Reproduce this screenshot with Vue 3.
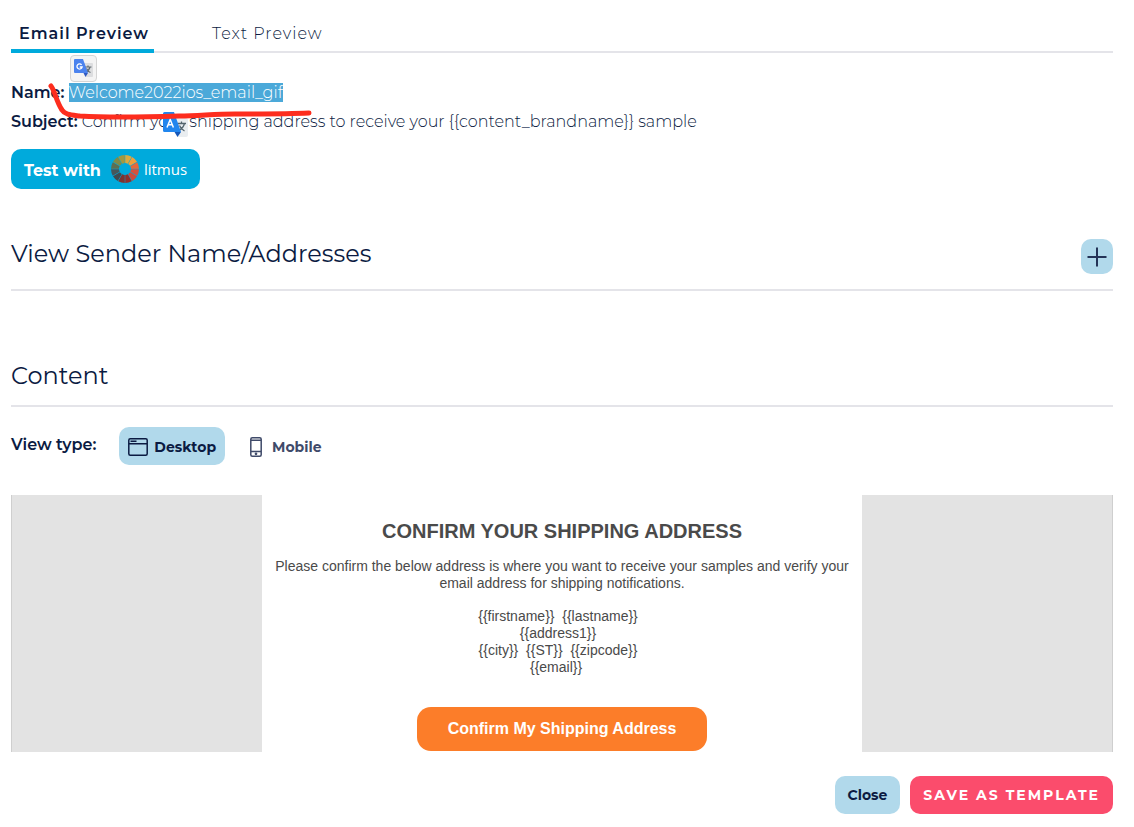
<script setup>
import { ref } from 'vue'

const tab = ref('email')
const view = ref('desktop')

const name = 'Welcome2022ios_email_gif'
const subject = 'Confirm your shipping address to receive your {{content_brandname}} sample'
const address = [
  '{{firstname}}\u00a0 {{lastname}}',
  '{{address1}}',
  '{{city}}\u00a0 {{ST}}\u00a0 {{zipcode}}',
  '{{email}}\u00a0',
]

const wheelColors = [
  '#dfaa3c', '#f0a03c', '#e8683a', '#d4513c', '#cb4b3c', '#8f2f2b',
  '#7d3330', '#3f4a50', '#46565a', '#5d6f50', '#7f8a48', '#a5983f',
]
const point = (radius, degrees) => {
  const a = (degrees * Math.PI) / 180
  return `${(15 + radius * Math.sin(a)).toFixed(2)} ${(15 - radius * Math.cos(a)).toFixed(2)}`
}
const wheel = wheelColors.map((color, i) => {
  const from = i * 30 + 1
  const to = i * 30 + 29
  return {
    color,
    d: `M${point(14, from)}A14 14 0 0 1 ${point(14, to)}L${point(6, to - 1)}A6 6 0 0 0 ${point(6, from + 1)}Z`,
  }
})
</script>

<template>
  <main class="page">
    <nav class="tabs" role="tablist">
      <button class="tab" :class="{ active: tab === 'email' }" role="tab" :aria-selected="tab === 'email'" @click="tab = 'email'">Email Preview</button>
      <button class="tab" :class="{ active: tab === 'text' }" role="tab" :aria-selected="tab === 'text'" @click="tab = 'text'">Text Preview</button>
    </nav>

    <section class="details">
      <p class="detail"><strong>Name:</strong> <mark>{{ name }}</mark></p>
      <p class="detail"><strong>Subject:</strong> {{ subject }}</p>

      <button class="bubble" aria-label="Translate selection">
        <svg width="19" height="19" viewBox="0 0 19 19">
          <path d="M8 4h10a1 1 0 0 1 1 1v12a1 1 0 0 1-1 1h-6z" fill="#dcdddf" />
          <path d="M11 8h6.500M14 6.500v1.500M16 8c-.6 2.500-2.500 4.500-4.500 5.500M12.500 9.500c1 2 2.500 3.500 4 4" fill="none" stroke="#5f6a70" stroke-width="1.200" />
          <path d="M1 0h8l5 14H1a1 1 0 0 1-1-1V1a1 1 0 0 1 1-1z" fill="#4b83ee" />
          <path d="M9.500 14H14l-2.500 4z" fill="#3059c0" />
          <path d="M7.600 5.800A2.600 2.600 0 1 0 8.100 8H5.700" fill="none" stroke="#fff" stroke-width="1.300" />
        </svg>
      </button>
      <svg class="badge" width="25" height="25" viewBox="0 0 25 25">
        <path d="M10 6h13a2 2 0 0 1 2 2v15a2 2 0 0 1-2 2h-8z" fill="#e9edf0" />
        <path d="M14.500 11.500h8.500M18.500 9.500v2M21.500 11.500c-.8 3-3 5.500-5.500 7M16.500 13.500c1 2.500 3 4.500 5 5.500" fill="none" stroke="#53646d" stroke-width="1.300" />
        <path d="M1.500 0h9.500l7 20H1.500A1.500 1.500 0 0 1 0 18.500v-17A1.500 1.500 0 0 1 1.500 0z" fill="#2186ee" />
        <path d="M11.500 20H18l-3.500 5z" fill="#1556b8" />
        <path d="M4 15.500L7.200 7.500L10.400 15.500M5.200 12.700h4" fill="none" stroke="#fff" stroke-width="1.500" />
      </svg>
      <svg class="marker" width="266" height="38" viewBox="0 0 266 38">
        <path d="M4 4C8 9 9 19 15 28C18 33 24 33 33 34C64 36 102 35 132 34C152 34 166 32 188 32C216 32 238 32 262 31" fill="none" stroke="#fd2d1e" stroke-width="5" stroke-linecap="round" stroke-linejoin="round" />
      </svg>

      <button class="litmus">
        <span class="label">Test with</span>
        <svg width="30" height="30" viewBox="0 0 30 30" aria-hidden="true">
          <path v-for="(s, i) in wheel" :key="i" :d="s.d" :fill="s.color" />
        </svg>
        <span class="brand">litmus</span>
      </button>
    </section>

    <header class="heading sender">
      <h2>View Sender Name/Addresses</h2>
      <button class="plus" aria-label="Expand sender names">
        <svg width="20" height="20" viewBox="0 0 20 20"><path d="M10 .5v19M.5 10h19" stroke="#243357" stroke-width="2" /></svg>
      </button>
    </header>

    <header class="heading content">
      <h2>Content</h2>
    </header>

    <div class="viewtype">
      <strong>View type:</strong>
      <button class="view" :class="{ active: view === 'desktop' }" @click="view = 'desktop'">
        <svg width="20" height="18" viewBox="0 0 20 18" fill="none" stroke="currentColor" stroke-width="1.500">
          <rect x=".8" y=".8" width="18.400" height="16.400" rx="1.500" />
          <path d="M1 5.700h18M2.500 3.300h6" />
        </svg>
        Desktop
      </button>
      <button class="view mobile" :class="{ active: view === 'mobile' }" @click="view = 'mobile'">
        <svg width="12" height="20" viewBox="0 0 12 20" fill="none" stroke="currentColor" stroke-width="1.500">
          <rect x=".8" y=".8" width="10.400" height="18.400" rx="1.500" />
          <path d="M1 3.200h10M1 14.500h10" />
          <circle cx="6" cy="16.800" r=".6" />
        </svg>
        Mobile
      </button>
    </div>

    <section class="preview">
      <article class="mail">
        <h1>CONFIRM YOUR SHIPPING ADDRESS</h1>
        <p>Please confirm the below address is where you want to receive your samples and verify your email address for shipping notifications.</p>
        <address>
          <span v-for="line in address" :key="line">{{ line }}</span>
        </address>
        <a class="cta" href="#">Confirm My Shipping Address</a>
      </article>
    </section>

    <footer class="actions">
      <button class="close">Close</button>
      <button class="save">SAVE AS TEMPLATE</button>
    </footer>
  </main>
</template>

<style>
body {
  margin: 0;
  background: #fff;
}
</style>

<style scoped>
.page {
  padding: 16px 21px 12px 11px;
  font-family: Montserrat, Inter, "Liberation Sans", sans-serif;
  font-size: 16px;
  color: #0b1b42;
}
button {
  margin: 0;
  padding: 0;
  border: 0;
  background: none;
  font: inherit;
  color: inherit;
  cursor: pointer;
}
svg {
  display: block;
  flex: none;
}
h1, h2, p {
  margin: 0;
}
strong {
  font-weight: 600;
}
.tabs {
  display: flex;
  gap: 50px;
  height: 35px;
  border-bottom: 2px solid #e4e4e9;
}
.tab {
  height: 37px;
  padding: 2px 5px 0 8px;
  border-bottom: 4px solid transparent;
  line-height: 31px;
  letter-spacing: 1px;
  font-weight: 300;
}
.tab.active {
  border-color: #00aadc;
  font-weight: 600;
}
.details {
  position: relative;
  padding-top: 25px;
}
.detail {
  line-height: 29px;
  font-weight: 300;
}
mark {
  background: #4ba9d9;
  color: #fff;
}
.bubble {
  position: absolute;
  top: 2px;
  left: 59px;
  display: grid;
  place-items: center;
  width: 27px;
  height: 27px;
  box-sizing: border-box;
  border: 1px solid #d5d5d5;
  border-radius: 4px;
  background: #f4f4f4;
}
.badge {
  position: absolute;
  top: 59px;
  left: 152px;
}
.marker {
  position: absolute;
  top: 29px;
  left: 36px;
  pointer-events: none;
}
.litmus {
  display: flex;
  align-items: center;
  gap: 4px;
  height: 40px;
  margin-top: 13px;
  padding: 0 13px;
  border-radius: 10px;
  background: #00aadc;
  color: #fff;
  font-weight: 700;
}
.label {
  padding: 2px 5px 0 0;
}
.brand {
  font-family: "Open Sans", sans-serif;
  font-size: 15px;
  font-weight: 400;
}
.heading {
  display: flex;
  align-items: center;
  justify-content: space-between;
  border-bottom: 2px solid #e4e4e9;
}
h2 {
  font-size: 24px;
  line-height: 30px;
  font-weight: 400;
}
.sender {
  margin-top: 50px;
  padding-bottom: 15px;
  align-items: flex-start;
}
.plus {
  display: grid;
  place-items: center;
  width: 32px;
  height: 35px;
  border-radius: 10px;
  background: #b1d9eb;
}
.content {
  margin-top: 70px;
  padding-bottom: 14px;
}
.viewtype {
  display: flex;
  align-items: center;
  margin-top: 20px;
}
.viewtype strong {
  padding-bottom: 4px;
  margin-right: 23px;
}
.view {
  display: flex;
  align-items: center;
  gap: 6px;
  height: 38px;
  padding: 2px 9px 0;
  border-radius: 10px;
  font-size: 14px;
  font-weight: 700;
  color: #3f4a69;
}
.view.active {
  background: #b1d9eb;
  color: #0b1b42;
}
.mobile {
  gap: 10px;
  margin-left: 16px;
}
.preview {
  margin-top: 30px;
  border: solid #cfcfcf;
  border-width: 0 1px;
  background: #e3e3e3;
}
.mail {
  max-width: 600px;
  box-sizing: border-box;
  margin: 0 auto;
  padding: 24px 10px 1px;
  background: #fff;
  color: #4a4a4a;
  font-family: "Liberation Sans", Arial, sans-serif;
  font-size: 14px;
  line-height: 17px;
  text-align: center;
}
h1 {
  margin-bottom: 15px;
  font-size: 20px;
  line-height: 24px;
}
address {
  margin: 16px 8px 31px 0;
  font-style: normal;
}
address span {
  display: block;
}
.cta {
  display: block;
  max-width: 290px;
  margin: 0 auto;
  border-radius: 14px;
  background: #fc7d29;
  color: #fff;
  font-size: 16px;
  line-height: 44px;
  font-weight: 700;
  text-decoration: none;
}
.actions {
  display: flex;
  justify-content: flex-end;
  gap: 10px;
  margin-top: 24px;
}
.actions button {
  height: 38px;
  padding: 0 13px;
  border-radius: 10px;
  font-size: 14px;
  font-weight: 700;
}
.close {
  background: #b1d9eb;
}
.actions .save {
  background: #fb4c6c;
  color: #fff;
  letter-spacing: 2px;
}
</style>
